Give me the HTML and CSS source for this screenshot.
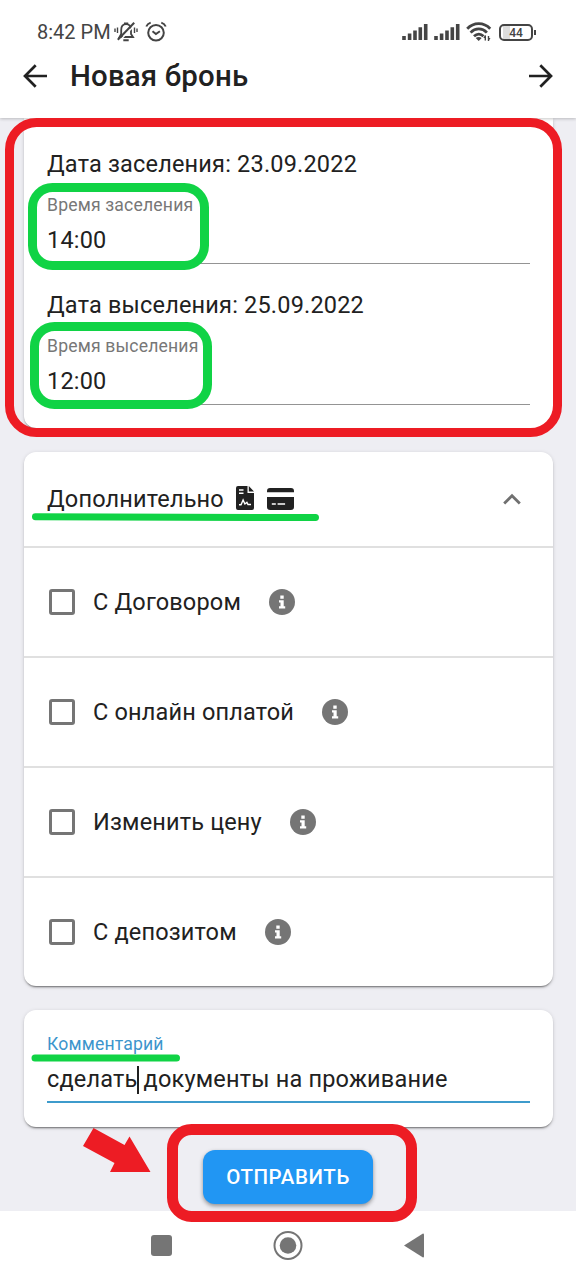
FILE: index.html
```html
<!DOCTYPE html>
<html lang="ru">
<head>
<meta charset="utf-8">
<title>Новая бронь</title>
<link rel="stylesheet" href="styles.css">
</head>
<body>
<div class="phone">
  <header class="header">
    <div class="status">
      <span class="clock">8:42 PM</span>
      <svg class="bell" width="24" height="22" viewBox="0 0 24 22" fill="none" stroke="#444" stroke-width="1.800">
        <path d="M5.500 16h13.500l-2-3V9c0-3.400-1.800-5.800-4.900-5.800S7.200 5.600 7.200 9v4z"/>
        <path d="M10 2.500h4.200M9.300 19.300h5.400" stroke-width="2"/>
        <path d="M5.200 20.200 21 3.800" stroke="#fff" stroke-width="1.500"/>
        <path d="M3.800 18.800 20.200 1.800" stroke-width="2"/>
        <path d="M1 7.500v3.500M3.500 6.500v5.500M20.500 6.500v5.500M23 7.500v3.500" stroke-width="1.400"/>
      </svg>
      <svg class="alarm" width="22" height="22" viewBox="0 0 22 22" fill="none" stroke="#444" stroke-width="2">
        <circle cx="11" cy="11.700" r="7.800"/>
        <path d="m7.500 10.200 3.400 2.800 4-2.800M1.300 5.500c.8-2 2.200-3.200 4.400-3.900M20.700 5.500c-.8-2-2.200-3.200-4.400-3.900"/>
      </svg>
      <svg class="signal" width="26" height="18" viewBox="0 0 26 18" stroke="#444" stroke-width="3.600">
        <path d="M2 17v-4M7.600 17v-6.500M13 17V7.500M18.300 17V4.200M23.700 17V1"/>
      </svg>
      <svg class="signal second" width="26" height="18" viewBox="0 0 26 18" stroke="#444" stroke-width="3.600">
        <path d="M2 17v-4M7.600 17v-6.500M13 17V7.500M18.300 17V4.200M23.700 17V1"/>
      </svg>
      <svg class="wifi" width="26" height="20" viewBox="0 0 26 20" fill="none" stroke="#444" stroke-width="2.800">
        <path d="M1.200 6.800c6.500-6.800 16.600-6.800 23 0M4.600 10.600c4.700-4.900 11.600-4.900 16.300 0M8 14.300c3-2.900 6.700-2.900 9.500 0"/>
        <path d="m9.700 16 3 3 3-3c-1.800-1.500-4.200-1.500-6 0z" fill="#444" stroke="none"/>
        <path d="M19.300 13.500v5M22.500 14v5" stroke-width="1.400"/>
        <path d="m17.300 16 2-3v3zM24.500 16l-2 3v-3z" fill="#444" stroke="none"/>
      </svg>
      <div class="battery"><span>44</span></div>
    </div>
    <div class="titlebar">
      <svg width="24" height="24" viewBox="0 0 24 24" fill="none" stroke="#212121" stroke-width="2.700"><path d="M24 12H2.200M12.700 1.300 2 12l10.700 10.700"/></svg>
      <h1>Новая бронь</h1>
      <svg class="next" width="24" height="24" viewBox="0 0 24 24" fill="none" stroke="#212121" stroke-width="2.700"><path d="M0 12h21.800M11.300 1.300 22 12 11.300 22.700"/></svg>
    </div>
  </header>

  <main class="content">
    <section class="card dates">
      <p class="date">Дата заселения: 23.09.2022</p>
      <div class="field"><label>Время заселения</label><div class="value">14:00</div></div>
      <p class="date">Дата выселения: 25.09.2022</p>
      <div class="field"><label>Время выселения</label><div class="value">12:00</div></div>
    </section>

    <section class="card extras">
      <div class="extras-head">
        <span>Дополнительно</span>
        <svg class="contract" width="18" height="24" viewBox="0 0 18 24">
          <path fill="#212121" d="M2 0h9.500v7H18v15a2 2 0 0 1-2 2H2a2 2 0 0 1-2-2V2a2 2 0 0 1 2-2zM12.800 0 18 5.500h-5.200z"/>
          <path d="M3 4h4.500M3 7.200h4.500M3 18.700h2l2.100-4.800 1.800 4.100 2-1.600 1.100 2.100h3" fill="none" stroke="#fff" stroke-width="1.400"/>
        </svg>
        <svg class="bank-card" width="27" height="22" viewBox="0 0 27 22">
          <path fill="#212121" d="M0 4.300V3a3 3 0 0 1 3-3h21a3 3 0 0 1 3 3v1.300zM0 9h27v10a3 3 0 0 1-3 3H3a3 3 0 0 1-3-3z"/>
          <path d="M4.800 16h4M10.600 16h7.500" stroke="#fff" stroke-width="1.700"/>
        </svg>
        <svg class="chevron" width="18" height="12" viewBox="0 0 18 12" fill="none" stroke="#707070" stroke-width="2.800"><path d="m1.200 10.500 7.800-7.800 7.800 7.800"/></svg>
      </div>
      <div class="option"><i class="box"></i><span>С Договором</span><svg class="info" viewBox="0 0 26 26"><circle cx="13" cy="13" r="13"/><path d="M11.300 6.500h3.400v3.300h-3.400zM10 11.200h4.700v6h1.500v2.300H10v-2.300h1.500v-3.700H10z"/></svg></div>
      <div class="option"><i class="box"></i><span>С онлайн оплатой</span><svg class="info" viewBox="0 0 26 26"><circle cx="13" cy="13" r="13"/><path d="M11.300 6.500h3.400v3.300h-3.400zM10 11.200h4.700v6h1.500v2.300H10v-2.300h1.500v-3.700H10z"/></svg></div>
      <div class="option"><i class="box"></i><span>Изменить цену</span><svg class="info" viewBox="0 0 26 26"><circle cx="13" cy="13" r="13"/><path d="M11.300 6.500h3.400v3.300h-3.400zM10 11.200h4.700v6h1.500v2.300H10v-2.300h1.500v-3.700H10z"/></svg></div>
      <div class="option"><i class="box"></i><span>С депозитом</span><svg class="info" viewBox="0 0 26 26"><circle cx="13" cy="13" r="13"/><path d="M11.300 6.500h3.400v3.300h-3.400zM10 11.200h4.700v6h1.500v2.300H10v-2.300h1.500v-3.700H10z"/></svg></div>
    </section>

    <section class="card comment">
      <label>Комментарий</label>
      <div class="value">сделать<i class="caret"></i> документы на проживание</div>
    </section>

    <button class="submit">ОТПРАВИТЬ</button>
  </main>

  <nav class="nav">
    <svg width="274" height="30" viewBox="0 0 274 30" fill="#757575">
      <rect x="0" y="5" width="21" height="21" rx="3"/>
      <circle cx="137" cy="15.500" r="13.500" fill="none" stroke="#757575" stroke-width="2"/>
      <circle cx="137" cy="15.500" r="8.300"/>
      <path d="M253 15.500 272 3.500q1 0 1 1v22q0 1-1 1z"/>
    </svg>
  </nav>

  <svg class="marks" width="576" height="1280" viewBox="0 0 576 1280" fill="none">
    <g stroke="#ed1c24">
      <rect x="9.500" y="122.500" width="548" height="310" rx="27" stroke-width="9"/>
      <rect x="172.500" y="1129.500" width="239" height="87" rx="19" stroke-width="11"/>
    </g>
    <g stroke="#10d345">
      <rect x="32.500" y="187.500" width="172" height="78" rx="20" stroke-width="9"/>
      <rect x="34.500" y="326.500" width="173" height="78" rx="20" stroke-width="9"/>
      <path d="m35.500 516.700 280 .9M35 1057.900h141.500" stroke-width="7" stroke-linecap="round"/>
    </g>
    <path fill="#ed1c24" d="m93.500 1128 31 17 5-8.500 21 35.500H110l4.500-9L83 1146z"/>
  </svg>
</div>
</body>
</html>
```

FILE: styles.css
```css
* { box-sizing: border-box; }

body {
  margin: 0;
  background: #eeeef3;
  color: #212121;
  font-family: Roboto, "Noto Sans", sans-serif;
}

.phone {
  position: relative;
  display: flex;
  flex-direction: column;
  width: 576px;
  height: 1280px;
  overflow: hidden;
}

.header {
  position: relative;
  flex: none;
  height: 118px;
  background: #fff;
  box-shadow: 0 1px 3px rgba(0, 0, 0, .22);
}

.status {
  display: flex;
  align-items: center;
  height: 54px;
  padding: 10px 43px 0 37px;
  color: #444;
}
.clock { width: 77px; font-size: 20px; line-height: 24px; letter-spacing: 0; white-space: nowrap; }
.alarm { margin-left: 7px; }
.signal { margin-left: auto; }
.signal.second { margin-left: 6px; }
.wifi { margin: 0 7px 0 6px; }
.battery {
  position: relative;
  width: 34px;
  height: 17px;
  border: 2px solid #444;
  border-radius: 5px;
  background: linear-gradient(90deg, #fff 2px, #ddd 2px 9px, #fff 9px);
  font-size: 12px;
  font-weight: 500;
  line-height: 14px;
  text-align: center;
}
.battery::after {
  content: "";
  position: absolute;
  top: 4px;
  right: -5px;
  width: 2px;
  height: 5px;
  background: #444;
}

.titlebar { display: flex; align-items: center; height: 44px; padding: 0 23px; }
.titlebar h1 {
  margin: 0 0 0 23px;
  font-size: 29.4px;
  font-weight: 500;
  line-height: 40px;
  letter-spacing: .2px;
}
.next { margin-left: auto; }

.content {
  display: flex;
  flex: none;
  flex-direction: column;
  height: 1093px;
  padding: 0 23px 0 24px;
}

.card {
  flex: none;
  border-radius: 12px;
  background: #fff;
  box-shadow: 0 2px 2px -1px rgba(0, 0, 0, .5), 0 1px 4px rgba(0, 0, 0, .14);
}

.dates {
  height: 310px;
  padding: 29px 23px 0;
  border-radius: 0 0 12px 12px;
}
.date { margin: 0; font-size: 23.5px; line-height: 35px; letter-spacing: .19px; }
.field { height: 82px; margin-bottom: 24px; border-bottom: 1px solid #949494; }
label {
  display: block;
  color: #777;
  font-size: 17.6px;
  line-height: 24px;
  letter-spacing: .17px;
}
.field label { padding-top: 11px; }
.value { font-size: 23.5px; line-height: 30px; letter-spacing: .2px; }
.field .value { padding-top: 8px; }

.extras { height: 534px; margin-top: 24px; font-size: 23.5px; letter-spacing: .17px; }
.extras-head { display: flex; align-items: center; height: 94px; padding: 0 32px 0 23px; }
.contract { margin: -2px 0 0 12px; }
.bank-card { margin: -1px 0 0 13px; }
.chevron { margin-left: auto; }
.option {
  display: flex;
  align-items: center;
  height: 110px;
  padding-left: 25px;
  border-top: 2px solid #e0e0e0;
}
.box { width: 26px; height: 26px; margin-right: 18px; border: 3px solid #757575; border-radius: 3px; }
.info { width: 26px; height: 26px; margin: -1px 0 0 28px; }
.info circle { fill: #757575; }
.info path { fill: #fff; }

.comment { height: 117px; margin-top: 24px; padding: 22px 23px 0; }
.comment label { color: #3c95cc; }
.comment .value { height: 47px; padding-top: 8px; border-bottom: 2.500px solid #3d9bcc; letter-spacing: .19px; white-space: nowrap; }
.caret {
  display: inline-block;
  width: 2px;
  height: 28px;
  margin: 0 -1px;
  background: #212121;
  vertical-align: -7px;
}

.submit {
  align-self: center;
  width: 170px;
  height: 54px;
  margin: 23px 1px 0 0;
  padding: 0;
  border: 0;
  border-radius: 12px;
  background: #2196f3;
  box-shadow: 0 2px 4px rgba(0, 0, 0, .4);
  color: #fff;
  font: 500 20.500px/52px Roboto, sans-serif;
  letter-spacing: .58px;
}

.nav {
  display: flex;
  flex: none;
  height: 69px;
  padding: 19px 0 0 151px;
  background: #fff;
}

/* Hand-drawn highlights over the form */
.marks { position: absolute; top: 0; left: 0; pointer-events: none; }
```
